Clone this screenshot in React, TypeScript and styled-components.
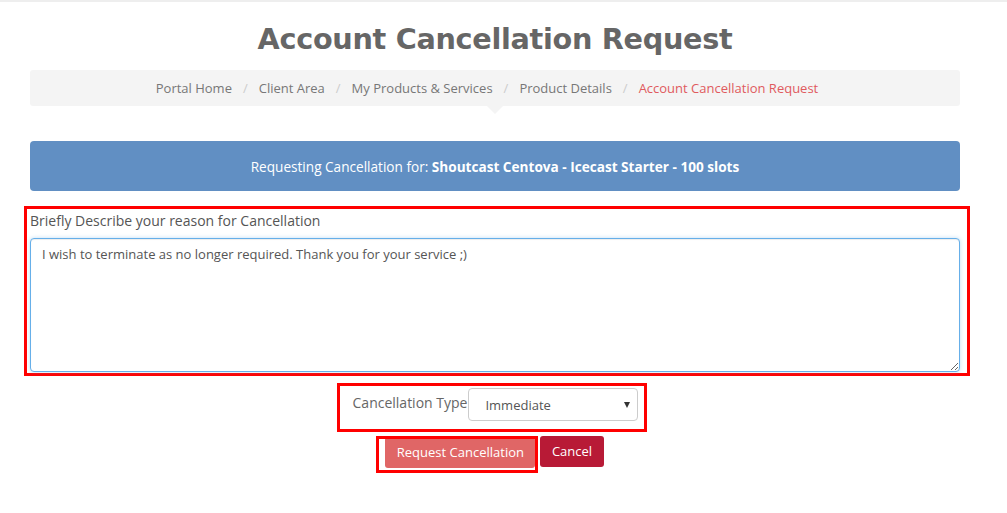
import React from 'react';
import styled, { createGlobalStyle } from 'styled-components';

const GlobalStyle = createGlobalStyle`
	html, body {
		margin: 0;
		padding: 0;
		background: #ffffff;
	}
	body {
		font-family: 'Open Sans', 'Liberation Sans', sans-serif;
		color: #555555;
	}
`;

const Page = styled.div`
	border-top: 2px solid #eeeeee;
	min-height: 511px;
	padding: 0 47px 0 30px;
`;

const Title = styled.h1`
	margin: 0;
	padding-top: 20px;
	height: 68px;
	box-sizing: border-box;
	text-align: center;
	font-family: 'DejaVu Sans', sans-serif;
	font-size: 28.7px;
	line-height: 34px;
	font-weight: 700;
	color: #666666;
	letter-spacing: -0.3px;
`;

const Breadcrumb = styled.ol`
	position: relative;
	list-style: none;
	margin: 0;
	padding: 0 16px 0 0;
	height: 36px;
	display: flex;
	justify-content: center;
	align-items: center;
	background: #f4f4f4;
	border-radius: 3px;
	font-size: 13px;

	&::after {
		content: '';
		position: absolute;
		left: 50%;
		bottom: -8px;
		margin-left: -8px;
		border-left: 8px solid transparent;
		border-right: 8px solid transparent;
		border-top: 8px solid #f4f4f4;
	}
`;

const Crumb = styled.li<{ $active?: boolean }>`
	color: ${(p) => (p.$active ? '#e05a5e' : '#777777')};

	&:not(:first-child)::before {
		content: '/';
		color: #cccccc;
		padding: 0 11px;
	}
`;

const Notice = styled.div`
	margin-top: 35px;
	height: 50px;
	display: flex;
	align-items: center;
	justify-content: center;
	background: #618fc3;
	border-radius: 4px;
	color: #ffffff;
	font-size: 13.6px;

	strong {
		font-weight: 700;
	}
`;

const Highlight = styled.div`
	border: 3px solid #ff0000;
	box-sizing: border-box;
`;

const ReasonBox = styled(Highlight)`
	margin: 15px -10px 0 -6px;
	padding: 2px 7px 1px 3px;
`;

const Label = styled.label`
	display: block;
	font-size: 14px;
	color: #555555;
	line-height: 20px;
	margin-bottom: 7px;
`;

const TextArea = styled.textarea`
	display: block;
	width: 100%;
	height: 134px;
	box-sizing: border-box;
	padding: 6px 11px;
	border: 1px solid #66afe9;
	border-radius: 4px;
	box-shadow: inset 0 1px 1px rgba(0, 0, 0, 0.075), 0 0 4px rgba(102, 175, 233, 0.4);
	font-family: 'Open Sans', sans-serif;
	font-size: 13px;
	color: #555555;
	resize: vertical;
	outline: none;
`;

const TypeRow = styled.div`
	display: flex;
	justify-content: center;
	margin-top: 7px;
	padding-right: 6px;
`;

const TypeBox = styled(Highlight)`
	display: flex;
	align-items: flex-start;
	gap: 1px;
	height: 49px;
	padding: 2px 6px 0 13px;
`;

const TypeLabel = styled.span`
	font-size: 14px;
	line-height: 20px;
	color: #666666;
	margin-top: 5px;
`;

const Select = styled.div`
	position: relative;
	width: 170px;
	height: 33px;
	box-sizing: border-box;
	border: 1px solid #cccccc;
	border-radius: 4px;
	display: flex;
	align-items: center;
	padding-left: 16px;
	font-size: 13px;
	color: #555555;
	background: #ffffff;

	&::after {
		content: '';
		position: absolute;
		right: 7px;
		top: 13px;
		border-left: 3.5px solid transparent;
		border-right: 3.5px solid transparent;
		border-top: 6px solid #333333;
	}
`;

const Actions = styled.div`
	display: flex;
	justify-content: center;
	align-items: flex-start;
	gap: 2px;
	margin-top: 4px;
	padding-right: 10px;
`;

/* the red annotation frame sits over the button, so it is drawn as an overlay */
const SubmitBox = styled.div`
	position: relative;
	height: 37px;
	box-sizing: border-box;
	padding: 1px 3px 0 9px;

	&::after {
		content: '';
		position: absolute;
		inset: 0;
		border: 3px solid #ff0000;
		pointer-events: none;
	}
`;

const Button = styled.button<{ $tone: 'primary' | 'danger'; $wide?: boolean }>`
	display: block;
	height: 31px;
	width: ${(p) => (p.$wide ? '150px' : 'auto')};
	border: none;
	border-radius: 3px;
	padding: ${(p) => (p.$wide ? '0 0 2px' : '0 11.5px 2px')};
	font-family: 'Open Sans', sans-serif;
	font-size: 13px;
	color: #ffffff;
	background: ${(p) => (p.$tone === 'primary' ? '#e06666' : '#b81a36')};
	cursor: pointer;
`;

export default function App() {
	return (
		<>
			<GlobalStyle />
			<Page>
				<Title>Account Cancellation Request</Title>
				<Breadcrumb>
					<Crumb>Portal Home</Crumb>
					<Crumb>Client Area</Crumb>
					<Crumb>My Products &amp; Services</Crumb>
					<Crumb>Product Details</Crumb>
					<Crumb $active>Account Cancellation Request</Crumb>
				</Breadcrumb>
				<Notice>
					<span>
						Requesting Cancellation for:&nbsp;
						<strong>Shoutcast Centova - Icecast Starter - 100 slots</strong>
					</span>
				</Notice>
				<ReasonBox>
					<Label htmlFor="reason">Briefly Describe your reason for Cancellation</Label>
					<TextArea
						id="reason"
						defaultValue="I wish to terminate as no longer required. Thank you for your service ;)"
					/>
				</ReasonBox>
				<TypeRow>
					<TypeBox>
						<TypeLabel>Cancellation Type</TypeLabel>
						<Select>Immediate</Select>
					</TypeBox>
				</TypeRow>
				<Actions>
					<SubmitBox>
						<Button $tone="primary" $wide>
							Request Cancellation
						</Button>
					</SubmitBox>
					<Button $tone="danger">Cancel</Button>
				</Actions>
			</Page>
		</>
	);
}
